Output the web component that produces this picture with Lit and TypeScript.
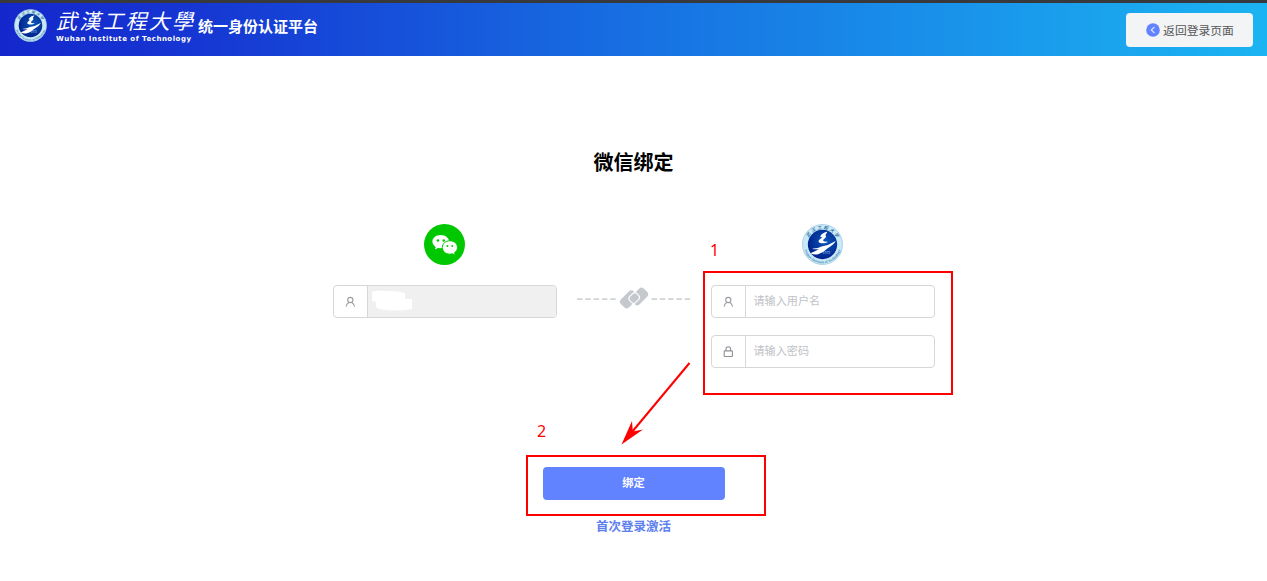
import { LitElement, html, css, svg } from "lit";
import { customElement, property } from "lit/decorators.js";

@customElement("wit-emblem")
class WitEmblem extends LitElement {
  @property({ type: Number }) size = 42;

  static styles = css`
    :host { display: block; line-height: 0; }
    text { font-family: "Liberation Serif", "Noto Sans CJK SC", serif; }
  `;

  render() {
    return html`<svg width=${this.size} height=${this.size} viewBox="0 0 84 84">
      <defs>
        <path id="top" d="M10.500 42 A31.500 31.500 0 0 1 73.500 42" />
        <path id="bottom" d="M3.500 42 A38.500 38.500 0 0 0 80.500 42" />
        <radialGradient id="disc" cx=".6" cy=".4" r=".7">
          <stop offset="0" stop-color="#0d57b8" />
          <stop offset=".55" stop-color="#04369c" />
          <stop offset="1" stop-color="#001a86" />
        </radialGradient>
      </defs>
      <circle cx="42" cy="42" r="41" fill="#c8e9f8" stroke="#9cc5de" stroke-width="1.500" />
      <circle cx="42" cy="42" r="30" fill="url(#disc)" />
      <text font-size="9" font-style="italic" font-weight="500" fill="#1d6294">
        <textPath href="#top" startOffset="50%" text-anchor="middle" textLength="70">武汉工程大学</textPath>
      </text>
      <text font-size="7" font-weight="700" fill="#3c80aa">
        <textPath href="#bottom" startOffset="50%" text-anchor="middle" textLength="98">Wuhan Institute of Technology</textPath>
      </text>
      <path fill="#fff" d="M52 16 L48 23 Q51 25 48 28 L43 33 Q44 37 50 36 L53 37 Q46 41 37 39 Q31 37 36 32 L42 27 Q36 28 38 24 Q42 18 52 16 Z" />
      <path fill="#fff" d="M17 60 Q27 56 35 51 Q26 53 21 50 Q31 51 40 46 Q55 44 69 35 Q65 43 52 50 Q43 59 33 62 Q25 64 17 60 Z" />
      <text x="50" y="62" font-size="8" text-anchor="middle" fill="#b7d7ff">1972</text>
    </svg>`;
  }
}

const userIcon = svg`<svg width="12" height="12" viewBox="0 0 12 12" fill="none" stroke="#999da1" stroke-width="1.100" stroke-linecap="round">
  <circle cx="6.300" cy="4" r="2.600" /><path d="M2.200 10.300 Q2.500 7.700 4.800 6.500 M7.800 6.500 Q10.100 7.700 10.400 10.300" /></svg>`;

const lockIcon = svg`<svg width="12" height="12" viewBox="0 0 12 12" fill="none" stroke="#8d9195" stroke-width="1.100" stroke-linejoin="round">
  <rect x="2.200" y="4.900" width="8.200" height="5.600" rx=".4" /><path d="M4 4.800 V3 A2.300 2.300 0 0 1 8.600 3 V4.800" /></svg>`;

@customElement("app-root")
class AppRoot extends LitElement {
  static styles = css`
    :host {
      display: block; position: relative; height: 581px; overflow: hidden; background: #fff;
      font-family: "Noto Sans CJK SC", sans-serif; color: #000;
    }
    * { box-sizing: border-box; }
    svg { display: block; flex: none; }
    header {
      height: 56px; border-top: 3px solid #38393d; padding: 0 14px 0 14px;
      background: linear-gradient(90deg, #1427cc 0%, #1637d3 16%, #1770e2 50%, #1aa4ee 88%, #1bb4f2 100%);
      display: flex; align-items: center; justify-content: space-between;
    }
    .brand { display: flex; align-items: flex-start; height: 100%; padding-top: 6px; color: #fff; }
    .brand wit-emblem { margin-right: 8px; }
    .school { width: 143px; overflow: visible; }
    .school text { fill: #fff; }
    .cn { font: italic 400 21px "Noto Sans CJK SC", serif; }
    .en { font: 700 7px "DejaVu Sans", sans-serif; }
    .platform { font-size: 15px; font-weight: 700; line-height: 22px; padding-top: 6px; white-space: nowrap; }
    .back {
      width: 127px; height: 34px; margin-top: 1px; border: 0; border-radius: 4px; background: #f3f4f6; padding: 0 0 0 1px;
      display: flex; align-items: center; justify-content: center; gap: 3px;
      font: 400 11.800px/20px "Noto Sans CJK SC", sans-serif; color: #555;
    }
    main { display: flex; flex-direction: column; align-items: center; padding-top: 91px; }
    h1 { margin: 0; font-size: 20px; line-height: 30px; font-weight: 700; }
    .bind { display: grid; grid-template-columns: 224px 114px 224px; column-gap: 20px; margin-top: 46px; }
    .side { display: flex; flex-direction: column; align-items: center; padding-top: 1px; }
    .field {
      display: flex; width: 224px; height: 33px; margin-top: 20px; border: 1px solid #d5d7da; border-radius: 4px;
      overflow: hidden; background: #fff;
    }
    .field + .field { margin-top: 17px; }
    .tag { width: 34px; flex: none; border-right: 1px solid #d5d7da; display: flex; align-items: center; justify-content: center; }
    .value { flex: 1; padding-left: 8px; font-size: 11.100px; line-height: 29px; color: #bfc2c7; }
    .locked .value { background: #f0f0f0; padding: 4px 0 0 3px; }
    .link { padding-top: 64px; }
    .submit {
      width: 182px; height: 33px; margin-top: 99px; border: 0; border-radius: 4px; background: #6183ff;
      color: #fff; font: 700 11.200px/31px "Noto Sans CJK SC", sans-serif; padding: 0 0 2px;
    }
    .activate { margin-top: 16px; font-size: 12.500px; line-height: 20px; font-weight: 700; color: #6080ee; }
    .marks { position: absolute; inset: 0; pointer-events: none; }
    .marks text { font: 16px "Noto Sans", sans-serif; fill: red; }
  `;

  private wechat() {
    return html`<svg width="41" height="41" viewBox="0 0 42 42">
      <circle cx="21" cy="21" r="21" fill="#00c800" />
      <path fill="#fff" d="M17 11.200 C12.200 11.200 8.600 14.200 8.600 18 C8.600 20.300 9.900 22.200 12 23.500 L11.200 26 L14.200 24.500 L17 24.900 C21.800 24.900 25.700 21.900 25.700 18 C25.700 14.200 21.800 11.200 17 11.200 Z" />
      <path fill="#fff" stroke="#00c800" stroke-width="1" d="M26.500 17.200 C22.100 17.200 18.800 20.100 18.800 24 C18.800 28 22.100 30.900 26.500 30.900 L28.900 30.500 L32 32 L31.300 29.300 C33.200 28.200 34.300 26.200 34.300 24 C34.300 20.100 30.900 17.200 26.500 17.200 Z" />
      <g fill="#00c800"><circle cx="14.300" cy="16.800" r="1.300" /><circle cx="20.200" cy="16.800" r="1.300" /><circle cx="24" cy="22.500" r="1" /><circle cx="29" cy="22.500" r="1" /></g>
    </svg>`;
  }

  render() {
    return html`
      <header>
        <div class="brand">
          <wit-emblem size="33"></wit-emblem>
          <svg class="school" width="143" height="36" viewBox="0 0 143 36">
            <text class="cn" x="1" y="20" textLength="137" lengthAdjust="spacing">武漢工程大學</text>
            <text class="en" x="1" y="32" textLength="135" lengthAdjust="spacing">Wuhan Institute of Technology</text>
          </svg>
          <span class="platform">统一身份认证平台</span>
        </div>
        <button class="back">
          <svg width="14" height="14" viewBox="0 0 14 14"><circle cx="7" cy="7" r="6.800" fill="#6183ff" /><path d="M8.500 3.900 L5.300 7 L8.500 10.100" fill="none" stroke="#dfe6ff" stroke-width="1.200" /></svg>
          <span>返回登录页面</span>
        </button>
      </header>
      <main>
        <h1>微信绑定</h1>
        <section class="bind">
          <div class="side">
            ${this.wechat()}
            <div class="field locked">
              <div class="tag">${userIcon}</div>
              <div class="value">
                <svg width="42" height="22" viewBox="0 0 42 22"><path fill="#fff" d="M1 2 Q2 .8 8 .8 Q25 .2 34 3 V9 H41 V19 Q25 22 8 19 Q4 18 5 12 L1 11 Z" /></svg>
              </div>
            </div>
          </div>
          <div class="link">
            <svg width="114" height="22" viewBox="0 0 114 22">
              <path d="M0 12.200 H40 M74.500 12.200 H114" stroke="#d0d4d8" stroke-width="1.800" stroke-dasharray="5.500 2.800" />
              <g transform="translate(51.700 12.700) rotate(-45)"><rect x="-8.600" y="-5.700" width="18" height="11.400" rx="3.500" fill="#c5c9ce" /></g>
              <g transform="translate(62.500 9.500) rotate(-45)"><rect x="-9.300" y="-6.300" width="18.500" height="12.400" rx="4" fill="#c5c9ce" stroke="#fff" stroke-width="1.100" /></g>
              <g transform="translate(57.200 11) rotate(-45)"><rect x="-5" y="-4.200" width="10" height="8.400" rx="3" fill="#c5c9ce" stroke="#fff" stroke-width="1.100" /></g>
            </svg>
          </div>
          <div class="side">
            <wit-emblem size="41"></wit-emblem>
            <div class="field"><div class="tag">${userIcon}</div><div class="value">请输入用户名</div></div>
            <div class="field"><div class="tag">${lockIcon}</div><div class="value">请输入密码</div></div>
          </div>
        </section>
        <button class="submit">绑定</button>
        <div class="activate">首次登录激活</div>
      </main>
      <svg class="marks" width="1267" height="581" viewBox="0 0 1267 581">
        <g fill="none" stroke="red" stroke-width="2">
          <rect x="704" y="272" width="248" height="122" />
          <rect x="527" y="456" width="238" height="59" />
          <path d="M689.500 363 L632 432" />
        </g>
        <path fill="red" d="M621.500 444.500 L632 421 L632.800 431.500 L643 429.500 Z" />
        <text x="710" y="256">1</text>
        <text x="537" y="437">2</text>
      </svg>
    `;
  }
}
